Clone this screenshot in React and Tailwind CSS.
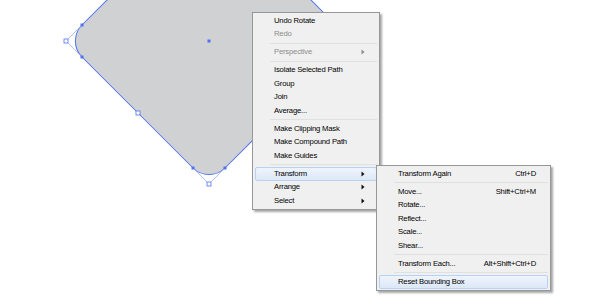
import React from 'react';

const mainItems = [
  { label: 'Undo Rotate' },
  { label: 'Redo', disabled: true },
  { sep: true },
  { label: 'Perspective', disabled: true, sub: true },
  { sep: true },
  { label: 'Isolate Selected Path' },
  { label: 'Group' },
  { label: 'Join' },
  { label: 'Average...' },
  { sep: true },
  { label: 'Make Clipping Mask' },
  { label: 'Make Compound Path' },
  { label: 'Make Guides' },
  { sep: true },
  { label: 'Transform', sub: true, active: true },
  { label: 'Arrange', sub: true },
  { label: 'Select', sub: true },
];

const subItems = [
  { label: 'Transform Again', key: 'Ctrl+D' },
  { sep: true },
  { label: 'Move...', key: 'Shift+Ctrl+M' },
  { label: 'Rotate...' },
  { label: 'Reflect...' },
  { label: 'Scale...' },
  { label: 'Shear...' },
  { sep: true },
  { label: 'Transform Each...', key: 'Alt+Shift+Ctrl+D' },
  { sep: true },
  { label: 'Reset Bounding Box', active: true },
];

function Arrow({ disabled }) {
  return (
    <svg width="4" height="6" viewBox="0 0 4 6" className="shrink-0">
      <path d="M0.5 0.5 L3.5 3 L0.5 5.5 Z" fill={disabled ? '#8a8a8a' : '#111'} />
    </svg>
  );
}

function Menu({ items, className }) {
  return (
    <div
      className={`absolute border border-[#979797] bg-[#f0f0f0] py-px shadow-[2px_2px_2px_rgba(0,0,0,0.35)] ${className}`}
      style={{ fontFamily: '"Liberation Sans", Arial, sans-serif' }}
    >
      {items.map((it, i) =>
        it.sep ? (
          <div key={i} className="flex h-[4.5px] items-center pl-[17px] pr-[2px]">
            <div className="h-px w-full bg-[#e0e0e0]" />
          </div>
        ) : (
          <div
            key={i}
            className={`mx-[2px] flex h-[13.5px] items-center rounded-[2px] border pl-[18px] pr-[11px] text-[7.7px] leading-none tracking-[-0.2px] ${
              it.active
                ? 'border-[#b8d2f2] bg-gradient-to-b from-[#eef4fc] to-[#dce8f8]'
                : 'border-transparent'
            } ${it.disabled ? 'text-[#8d8d8d]' : 'text-[#000]'}`}
          >
            <span className="flex-1 whitespace-nowrap">{it.label}</span>
            {it.key && <span className="whitespace-nowrap">{it.key}</span>}
            {it.sub && <Arrow disabled={it.disabled} />}
          </div>
        )
      )}
    </div>
  );
}

function Shape() {
  const blue = '#4f72f2';
  const light = '#9db2f6';
  const hollow = [
    [66, 41],
    [209, 184],
    [138, 113],
  ];
  const filled = [
    [82, 25],
    [82, 57],
    [193, 168],
    [225, 168],
    [209, 41],
  ];
  return (
    <svg className="absolute left-0 top-0" width="590" height="306" viewBox="0 0 590 306">
      <rect
        x="107.9"
        y="-60.1"
        width="202.2"
        height="202.2"
        rx="22.6"
        fill="#d0d1d3"
        stroke={blue}
        strokeWidth="1"
        transform="rotate(45 209 41)"
      />
      <polyline points="82,25 66,41 82,57" fill="none" stroke={light} strokeWidth="0.8" />
      <polyline points="193,168 209,184 225,168" fill="none" stroke={light} strokeWidth="0.8" />
      {hollow.map(([x, y], i) => (
        <rect key={i} x={x - 2} y={y - 2} width="4" height="4" fill="#fff" stroke={blue} strokeWidth="0.8" />
      ))}
      {filled.map(([x, y], i) => (
        <rect key={i} x={x - 1.5} y={y - 1.5} width="3" height="3" fill={blue} />
      ))}
    </svg>
  );
}

export default function App() {
  return (
    <div className="relative h-[306px] w-[590px] overflow-hidden bg-white">
      <Shape />
      <Menu items={mainItems} className="left-[252px] top-[12px] w-[128px]" />
      <Menu items={subItems} className="left-[376px] top-[165px] w-[175px]" />
    </div>
  );
}
